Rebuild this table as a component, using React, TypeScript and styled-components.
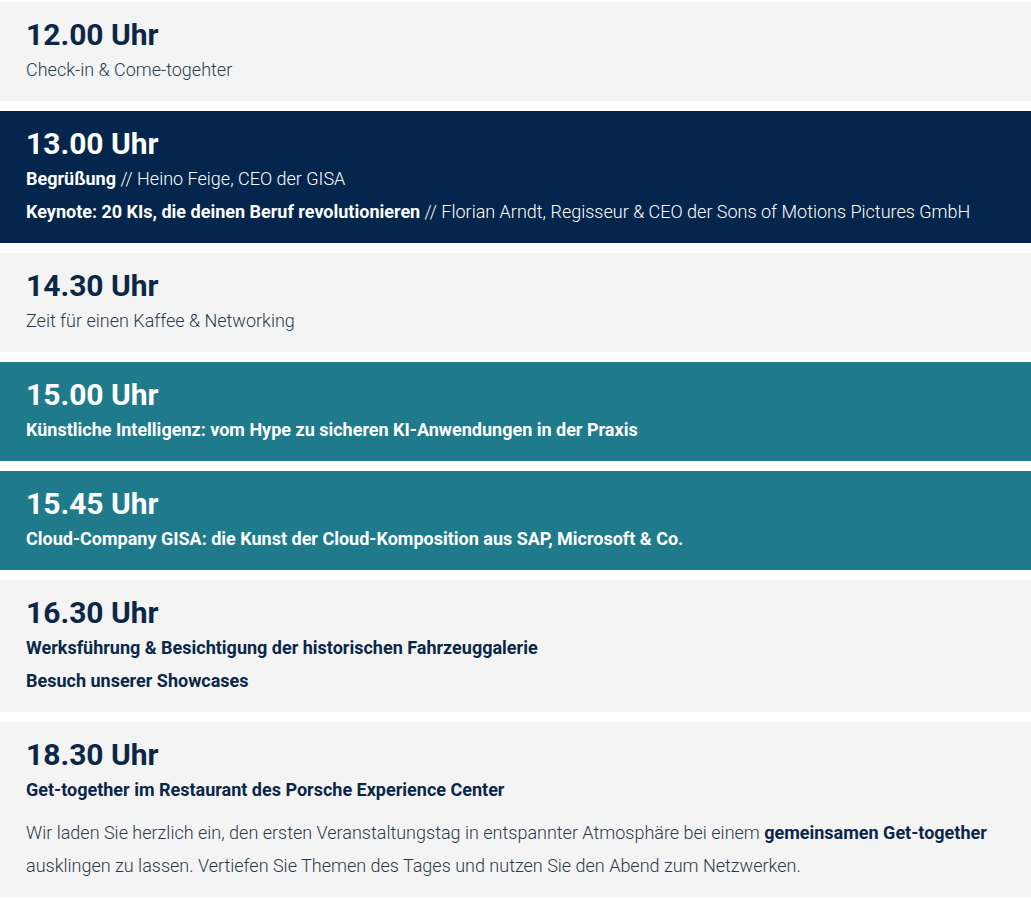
import React from 'react';
import styled, { createGlobalStyle } from 'styled-components';

const GlobalStyle = createGlobalStyle`
  html, body {
    margin: 0;
    padding: 0;
    background: #ffffff;
    font-family: Roboto, "Liberation Sans", Arial, sans-serif;
  }
`;

type Variant = 'light' | 'navy' | 'teal';

const palette: Record<Variant, { bg: string; head: string; text: string; strong: string }> = {
  light: { bg: '#f4f4f4', head: '#0b2748', text: '#2a3a4d', strong: '#0b2748' },
  navy: { bg: '#04264c', head: '#ffffff', text: '#ffffff', strong: '#ffffff' },
  teal: { bg: '#1f7b8c', head: '#ffffff', text: '#ffffff', strong: '#ffffff' },
};

const Agenda = styled.div`
  display: flex;
  flex-direction: column;
  gap: 10px;
  padding-top: 2px;
`;

const Slot = styled.section<{ $variant: Variant }>`
  background: ${(p) => palette[p.$variant].bg};
  color: ${(p) => palette[p.$variant].text};
  padding: 15px 26px 15px;
`;

const Time = styled.h2<{ $variant: Variant }>`
  margin: 0;
  font-size: 30px;
  line-height: 36px;
  font-weight: 700;
  color: ${(p) => palette[p.$variant].head};
`;

const Line = styled.p<{ $variant: Variant }>`
  margin: 0;
  font-size: 18px;
  line-height: 33px;
  font-weight: 300;

  strong {
    font-weight: 700;
    color: ${(p) => palette[p.$variant].strong};
  }
`;

const Title = styled.p<{ $variant: Variant }>`
  margin: 0;
  font-size: 18px;
  line-height: 33px;
  font-weight: 700;
  color: ${(p) => palette[p.$variant].strong};
`;

const Paragraph = styled.p`
  margin: 10px 0 0;
  font-size: 18px;
  line-height: 33px;
  font-weight: 300;
  color: #2a3a4d;

  strong {
    font-weight: 700;
    color: #0b2748;
  }
`;

const App: React.FC = () => (
  <>
    <GlobalStyle />
    <Agenda>
      <Slot $variant="light">
        <Time $variant="light">12.00 Uhr</Time>
        <Line $variant="light">Check-in &amp; Come-togehter</Line>
      </Slot>

      <Slot $variant="navy">
        <Time $variant="navy">13.00 Uhr</Time>
        <Line $variant="navy">
          <strong>Begrüßung</strong> // Heino Feige, CEO der GISA
        </Line>
        <Line $variant="navy">
          <strong>Keynote: 20 KIs, die deinen Beruf revolutionieren</strong> // Florian Arndt, Regisseur &amp; CEO der
          Sons of Motions Pictures GmbH
        </Line>
      </Slot>

      <Slot $variant="light">
        <Time $variant="light">14.30 Uhr</Time>
        <Line $variant="light">Zeit für einen Kaffee &amp; Networking</Line>
      </Slot>

      <Slot $variant="teal">
        <Time $variant="teal">15.00 Uhr</Time>
        <Title $variant="teal">Künstliche Intelligenz: vom Hype zu sicheren KI-Anwendungen in der Praxis</Title>
      </Slot>

      <Slot $variant="teal">
        <Time $variant="teal">15.45 Uhr</Time>
        <Title $variant="teal">Cloud-Company GISA: die Kunst der Cloud-Komposition aus SAP, Microsoft &amp; Co.</Title>
      </Slot>

      <Slot $variant="light">
        <Time $variant="light">16.30 Uhr</Time>
        <Title $variant="light">Werksführung &amp; Besichtigung der historischen Fahrzeuggalerie</Title>
        <Title $variant="light">Besuch unserer Showcases</Title>
      </Slot>

      <Slot $variant="light">
        <Time $variant="light">18.30 Uhr</Time>
        <Title $variant="light">Get-together im Restaurant des Porsche Experience Center</Title>
        <Paragraph>
          Wir laden Sie herzlich ein, den ersten Veranstaltungstag in entspannter Atmosphäre bei einem{' '}
          <strong>gemeinsamen Get-together</strong> ausklingen zu lassen. Vertiefen Sie Themen des Tages und nutzen Sie
          den Abend zum Netzwerken.
        </Paragraph>
      </Slot>
    </Agenda>
  </>
);

export default App;
